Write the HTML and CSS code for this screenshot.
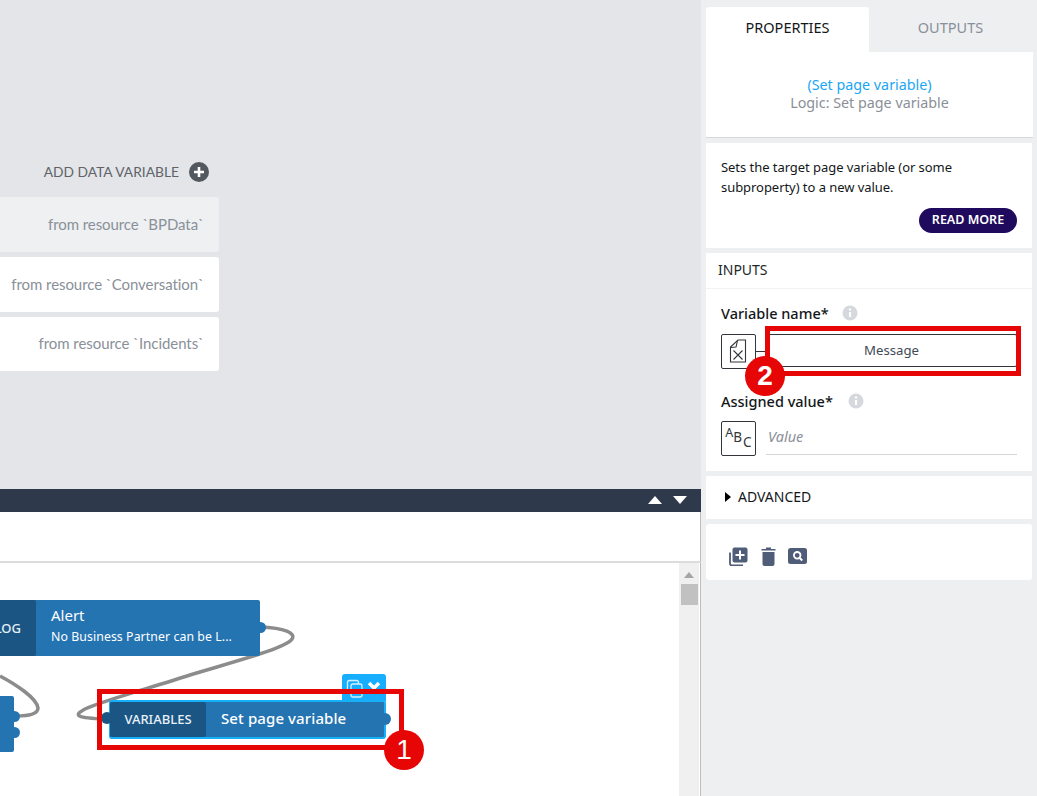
FILE: index.html
```html
<!DOCTYPE html>
<html lang="en">
<head>
<meta charset="utf-8">
<title>Set page variable</title>
<link rel="stylesheet" href="styles.css">
</head>
<body>
<div class="app">
  <main class="editor">
    <section class="data-pane">
      <div class="add-row">
        <span class="add-label">ADD DATA VARIABLE</span>
        <svg class="add-icon" width="20" height="20" viewBox="0 0 20 20"><circle cx="10" cy="10" r="10" fill="#53585f"/><path d="M10 5v10M5 10h10" stroke="#fff" stroke-width="2.6"/></svg>
      </div>
      <ul class="data-list">
        <li class="data-item data-item-active">from resource `BPData`</li>
        <li class="data-item">from resource `Conversation`</li>
        <li class="data-item data-item-last">from resource `Incidents`</li>
      </ul>
    </section>
    <section class="logic-pane">
      <div class="logic-bar">
        <svg width="16" height="9" viewBox="0 0 16 9"><path d="M8 0l7 8H1z" fill="#fff"/></svg>
        <svg width="16" height="9" viewBox="0 0 16 9"><path d="M1 0h14L8 8z" fill="#fff"/></svg>
      </div>
      <div class="logic-toolbar"></div>
      <div class="logic-body">
        <div class="logic-canvas">
          <svg class="wires" width="679" height="234" viewBox="0 0 679 234">
            <path d="M260 64C285 65 296 70 292 76C286 85 240 97 190 112C150 125 105 137 85 146C72 153 78 155 105 156" fill="none" stroke="#8c8c8c" stroke-width="3.5"/>
            <path d="M16 153C30 153 38 151 38 145C37 135 15 121 0 113" fill="none" stroke="#8c8c8c" stroke-width="3.5"/>
          </svg>
          <div class="node node-alert">
            <div class="node-tag">LOG</div>
            <div class="node-text">
              <div class="node-title">Alert</div>
              <div class="node-sub">No Business Partner can be L...</div>
            </div>
            <span class="port port-out"></span>
          </div>
          <div class="node node-stub">
            <span class="port port-a"></span>
            <span class="port port-b"></span>
          </div>
          <div class="tool-pop">
            <svg width="22" height="26" viewBox="0 0 22 26"><rect x="5.500" y="6.500" width="11" height="11" rx="2" fill="none" stroke="#d5f0ff" stroke-width="1.300"/><rect x="9" y="10" width="11" height="13" rx="2" fill="#17aeff" stroke="#d5f0ff" stroke-width="1.300"/></svg>
            <svg width="20" height="26" viewBox="0 0 20 26"><path d="M5 9l5 5 5-5" fill="none" stroke="#fff" stroke-width="3.500"/></svg>
          </div>
          <div class="node node-selected">
            <span class="port port-in"></span>
            <div class="node-tag node-tag-small">VARIABLES</div>
            <div class="node-label">Set page variable</div>
            <span class="port port-right"></span>
          </div>
        </div>
        <div class="scrollbar">
          <svg width="12" height="8" viewBox="0 0 12 8"><path d="M6 1l5 6H1z" fill="#a5a5a5"/></svg>
          <div class="scroll-thumb"></div>
        </div>
      </div>
    </section>
  </main>

  <aside class="panel">
    <div class="tabs">
      <div class="tab tab-active">PROPERTIES</div>
      <div class="tab">OUTPUTS</div>
    </div>
    <div class="card card-head">
      <div class="head-name">(Set page variable)</div>
      <div class="head-type">Logic: Set page variable</div>
    </div>
    <div class="card card-desc">
      <p class="desc">Sets the target page variable (or some subproperty) to a new value.</p>
      <div class="desc-actions"><button class="read-more">READ MORE</button></div>
    </div>
    <div class="card card-inputs">
      <div class="inputs-title">INPUTS</div>
      <div class="inputs-body">
        <div class="field-label">Variable name*
          <svg width="16" height="16" viewBox="0 0 16 16"><circle cx="8" cy="8" r="7.500" fill="#d5d8dc"/><path d="M8 7v5M8 3.600v1.800" stroke="#fff" stroke-width="2.200"/></svg>
        </div>
        <div class="field-row">
          <span class="type-box">
            <svg class="doc-icon" width="18" height="24" viewBox="0 0 18 24"><path d="M9 1h7.500v22H1.500V8z" fill="none" stroke="#32363a" stroke-width="1.100"/><path d="M8.500 1.500l-1.500 6.500-5.500.500" fill="none" stroke="#32363a" stroke-width="1.100"/><path d="M4.500 11.500l9 9M13.500 11.500l-9 9" stroke="#32363a" stroke-width="1.100"/></svg>
          </span>
          <span class="connector"></span>
          <button class="value-btn">Message</button>
        </div>
        <div class="field-label field-label-second">Assigned value*
          <svg width="16" height="16" viewBox="0 0 16 16"><circle cx="8" cy="8" r="7.500" fill="#d5d8dc"/><path d="M8 7v5M8 3.600v1.800" stroke="#fff" stroke-width="2.200"/></svg>
        </div>
        <div class="field-row">
          <span class="type-box type-abc"><span class="abc-a">A</span><span class="abc-b">B</span><span class="abc-c">C</span></span>
          <span class="value-input">Value</span>
        </div>
      </div>
    </div>
    <div class="card card-adv">
      <svg width="6" height="10" viewBox="0 0 6 10"><path d="M0 0l6 5-6 5z" fill="#000"/></svg>
      <span>ADVANCED</span>
    </div>
    <div class="card card-actions">
      <svg width="19" height="19" viewBox="0 0 19 19"><path d="M1 5.500v11a2 2 0 0 0 2 2h11" fill="none" stroke="#4f5d78" stroke-width="1.800"/><rect x="3.500" y="0.500" width="15" height="15" rx="2" fill="#4f5d78"/><path d="M11 3.500v9M6.500 8h9" stroke="#fff" stroke-width="2"/></svg>
      <svg width="15" height="19" viewBox="0 0 15 19"><path d="M0.500 2h14v1.600h-14zM5 .5h5V2H5z" fill="#4f5d78"/><path d="M1.500 5h12v12a2 2 0 0 1-2 2h-8a2 2 0 0 1-2-2z" fill="#4f5d78"/></svg>
      <svg width="19" height="16" viewBox="0 0 19 16"><rect width="19" height="16" rx="2.500" fill="#4f5d78"/><circle cx="9.200" cy="7.300" r="3.300" fill="none" stroke="#fff" stroke-width="1.800"/><path d="M11.500 9.800l2.700 2.700" stroke="#fff" stroke-width="2"/></svg>
    </div>
  </aside>

  <div class="mark mark-one"></div>
  <div class="mark mark-two"></div>
  <div class="badge badge-one">1</div>
  <div class="badge badge-two">2</div>
</div>
</body>
</html>
```

FILE: styles.css
```css
* { box-sizing: border-box; }
html, body { margin: 0; padding: 0; }
body { font-family: "Noto Sans", "Open Sans", Arial, sans-serif; overflow: hidden; }
.app { position: relative; display: flex; width: 1037px; height: 796px; overflow: hidden; background: #edeff1; }

.editor { display: flex; flex-direction: column; width: 701px; height: 796px; flex: none; }
.data-pane { height: 489px; background: #e3e5e9; padding-top: 162px; font-family: Lato, "Open Sans", sans-serif; }
.add-row { display: flex; align-items: center; justify-content: flex-end; width: 209px; height: 20px; gap: 10px; font-size: 13.800px; color: #5f6368; }
.add-label { margin-bottom: 2px; }
.data-list { list-style: none; margin: 15px 0 0; padding: 0; width: 219px; display: flex; flex-direction: column; gap: 5px; }
.data-item { height: 55px; display: flex; align-items: center; justify-content: flex-end; padding: 0 15px 2px 0; white-space: nowrap; font-size: 15px; letter-spacing: -.07px; color: #8a9099; background: #fff; border-radius: 0 3px 3px 0; }
.data-item-active { background: #eef0f2; }
.data-item-last { height: 54px; padding-bottom: 3px; }

.logic-pane { flex: 1; display: flex; flex-direction: column; min-height: 0; }
.logic-bar { height: 23px; background: #2e3a4c; display: flex; align-items: center; justify-content: flex-end; gap: 9px; padding-right: 13px; }
.logic-toolbar { height: 51px; background: #fff; border-bottom: 2px solid #dcdcdc; border-right: 1px solid #bdbdbd; }
.logic-body { flex: 1; display: flex; background: #fff; border-right: 1px solid #bdbdbd; min-height: 0; }
.logic-canvas { position: relative; width: 679px; overflow: hidden; }
.wires { position: absolute; left: 0; top: 0; }
.scrollbar { width: 20px; background: #f0f0f0; display: flex; flex-direction: column; align-items: center; padding-top: 8px; }
.scroll-thumb { width: 17px; height: 21px; margin-top: 5px; background: #c1c1c1; }

.node { position: absolute; background: #2574b2; color: #fff; border-radius: 2px; }
.node-alert { left: -40px; top: 37px; width: 300px; height: 56px; display: flex; }
.node-tag { background: #1a5583; border-radius: 2px; color: #e8f1f8; display: flex; align-items: center; justify-content: flex-end; }
.node-alert .node-tag { width: 76px; padding-right: 15px; font-size: 13px; font-weight: 500; height: 56px; }
.node-text { padding: 5px 0 0 15px; }
.node-title { font-size: 15px; line-height: 20px; }
.node-sub { font-size: 12.300px; line-height: 23px; white-space: nowrap; letter-spacing: .08px; }
.node-stub { left: -40px; top: 133px; width: 54px; height: 56px; }
.node-selected { left: 109px; top: 137px; width: 277px; height: 39px; display: flex; border: 2px solid #16b0f8; border-radius: 3px; border-left-width: 1px; }
.node-tag-small { width: 96px; padding-bottom: 2px; font-size: 13px; font-weight: 500; justify-content: center; }
.node-label { padding-left: 15px; font-size: 15px; font-weight: 500; line-height: 33px; white-space: nowrap; letter-spacing: .1px; }
.port { position: absolute; width: 11px; height: 11px; border-radius: 50%; background: #2574b2; }
.port-out { right: -6px; top: 22px; }
.port-a { right: -6px; top: 15px; }
.port-b { right: -6px; top: 31px; }
.port-in { left: -9px; top: 10px; width: 12px; height: 12px; background: #1a5583; }
.port-right { right: -7px; top: 11px; width: 12px; height: 12px; }
.tool-pop { position: absolute; left: 342px; top: 111px; width: 44px; height: 27px; background: #17aeff; border-radius: 3px 3px 0 0; display: flex; }

.panel { width: 336px; flex: none; display: flex; flex-direction: column; gap: 5px; padding: 7px 4px 0 5px; }
.tabs { display: flex; height: 45px; margin-bottom: -5px; }
.tab { width: 163px; padding-bottom: 5px; display: flex; align-items: center; justify-content: center; font-size: 14.500px; color: #8a9099; }
.tab-active { background: #fff; color: #14171a; border-radius: 3px 3px 0 0; }
.card { background: #fff; width: 326px; }
.card-head { width: 327px; height: 86px; border-bottom: 1px solid #d6d8dc; padding-top: 24px; text-align: center; font-size: 14.300px; line-height: 18px; }
.head-name { color: #1aa6f5; }
.head-type { color: #8a8f98; }
.card-desc { height: 105px; padding: 14px 15px 0; }
.desc { margin: 0; font-size: 13px; line-height: 20px; letter-spacing: -.05px; color: #14171a; }
.desc-actions { display: flex; justify-content: flex-end; margin-top: 11px; }
.read-more { width: 98px; height: 25px; padding: 0 0 2px; border: 0; border-radius: 13px; background: #200a5e; color: #fff; font: 600 12.500px "Noto Sans", sans-serif; }
.card-inputs { height: 218px; }
.inputs-title { height: 36px; padding-left: 12px; border-bottom: 1px solid #f1f2f3; font-size: 14px; line-height: 33px; color: #22272b; }
.inputs-body { padding: 14px 15px 0; }
.field-label { display: flex; align-items: center; gap: 13px; height: 20px; font-size: 14.500px; font-weight: 500; color: #14171a; }
.field-label-second { margin-top: 22px; gap: 15px; }
.field-row { display: flex; align-items: center; height: 35px; margin-top: 11px; }
.field-label-second + .field-row { margin-top: 10px; }
.type-box { position: relative; width: 35px; height: 35px; flex: none; border: 1px solid #32363a; border-radius: 2px; display: flex; align-items: center; justify-content: center; }
.doc-icon { margin: 0 2px 2px 0; }
.connector { width: 12px; border-top: 1px solid #32363a; }
.value-btn { width: 249px; height: 33px; margin-bottom: 2px; padding: 0 2px 2px 0; background: #fff; border: 1px solid #32363a; border-radius: 2px; font: 13.200px "Noto Sans", sans-serif; color: #3f4a57; }
.type-abc { align-items: flex-start; color: #32363a; line-height: 14px; font-size: 12.500px; }
.abc-a { margin-top: 4px; }
.abc-b { margin-top: 8px; font-size: 13.500px; }
.abc-c { margin-top: 13px; margin-left: 1px; font-size: 13.500px; }
.value-input { margin-left: 10px; width: 251px; height: 34px; margin-bottom: 1px; line-height: 31px; padding-left: 2px; border-bottom: 1px solid #d5d5d5; font-size: 14.500px; font-style: italic; color: #8a8f98; }
.card-adv { height: 43px; display: flex; align-items: center; gap: 7px; padding: 0 0 2px 19px; font-size: 14px; color: #14171a; }
.card-actions { height: 56px; display: flex; align-items: center; gap: 12.500px; padding: 8px 0 0 23px; border-radius: 3px; }

.mark { position: absolute; border: 5px solid #e60606; }
.mark-one { left: 97px; top: 689px; width: 307px; height: 61px; }
.mark-two { left: 765px; top: 326px; width: 256px; height: 50px; }
.badge { position: absolute; width: 40px; height: 40px; border-radius: 50%; background: #e60606; color: #fff; font: 28px/40px "Liberation Sans", Arial, sans-serif; text-align: center; }
.badge-one { left: 384px; top: 730px; }
.badge-two { left: 745px; top: 356px; font-weight: 700; }
```
